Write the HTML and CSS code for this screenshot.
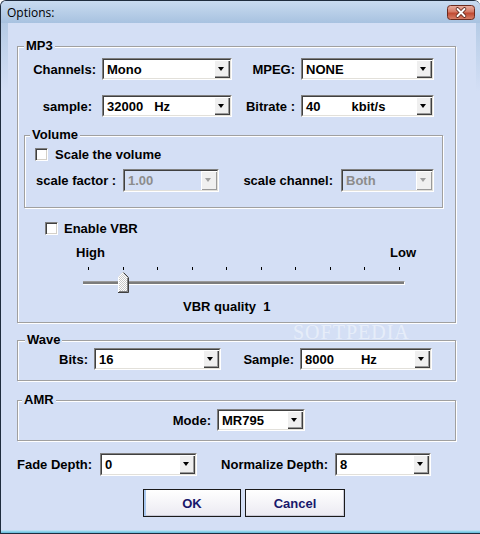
FILE: index.html
```html
<!DOCTYPE html>
<html lang="en">
<head>
  <meta charset="UTF-8">
  <title>Options</title>
  <link rel="stylesheet" href="styles.css">
</head>
<body>
  <div class="window">
    <!-- Title bar -->
    <div class="titlebar">
      <span class="title">Options:</span>
      <span class="close">
        <svg width="28" height="15" viewBox="0 0 28 15">
          <defs>
            <linearGradient id="closeGrad" x1="0" y1="0" x2="0" y2="1">
              <stop offset="0" stop-color="#eab0a2"/>
              <stop offset="0.45" stop-color="#d57a66"/>
              <stop offset="0.55" stop-color="#c04a33"/>
              <stop offset="1" stop-color="#d9836c"/>
            </linearGradient>
          </defs>
          <rect x="0.5" y="0.5" width="27" height="14" rx="3" fill="url(#closeGrad)" stroke="#6b2a1e"/>
          <path d="M10.5 4 L17.5 11 M17.5 4 L10.5 11" stroke="#5a2318" stroke-width="3.6" stroke-linecap="round"/>
          <path d="M10.5 4 L17.5 11 M17.5 4 L10.5 11" stroke="#fff" stroke-width="2" stroke-linecap="round"/>
        </svg>
      </span>
    </div>

    <div class="client">
      <!-- MP3 -->
      <fieldset class="group group-mp3">
        <legend class="legend-mp3">MP3</legend>
        <div class="row">
          <label class="lbl lbl-chan">Channels:</label>
          <div class="combo combo-130"><div class="combo-in"><span class="value">Mono</span><span class="drop"></span></div></div>
          <label class="lbl lbl-mpeg">MPEG:</label>
          <div class="combo combo-133"><div class="combo-in"><span class="value">NONE</span><span class="drop"></span></div></div>
        </div>
        <div class="row row-second">
          <label class="lbl lbl-chan lbl-sample">sample:</label>
          <div class="combo combo-130"><div class="combo-in"><span class="value">32000<span class="unit unit-hz">Hz</span></span><span class="drop"></span></div></div>
          <label class="lbl lbl-mpeg">Bitrate :</label>
          <div class="combo combo-133"><div class="combo-in"><span class="value">40<span class="unit unit-kbit">kbit/s</span></span><span class="drop"></span></div></div>
        </div>

        <!-- Volume -->
        <fieldset class="group group-volume">
          <legend class="legend-volume">Volume</legend>
          <div class="check-row check-scale">
            <span class="checkbox"></span>
            <span>Scale the volume</span>
          </div>
          <div class="row row-scale">
            <label class="lbl lbl-factor">scale factor :</label>
            <div class="combo combo-96 disabled"><div class="combo-in"><span class="value">1.00</span><span class="drop"></span></div></div>
            <label class="lbl lbl-channel">scale channel:</label>
            <div class="combo combo-93 disabled"><div class="combo-in"><span class="value">Both</span><span class="drop"></span></div></div>
          </div>
        </fieldset>

        <div class="check-row check-vbr">
          <span class="checkbox"></span>
          <span>Enable VBR</span>
        </div>

        <div class="scale-labels">
          <span>High</span>
          <span>Low</span>
        </div>
        <div class="ticks">
          <span></span><span></span><span></span><span></span><span></span>
          <span></span><span></span><span></span><span></span><span></span>
        </div>
        <div class="slider">
          <div class="track"></div>
          <svg class="thumb" width="11" height="21" viewBox="0 0 11 21">
            <defs>
              <pattern id="dither" width="2" height="2" patternUnits="userSpaceOnUse">
                <rect width="2" height="2" fill="#ffffff"/>
                <rect width="1" height="1" fill="#c8c8c8"/>
                <rect x="1" y="1" width="1" height="1" fill="#c8c8c8"/>
              </pattern>
            </defs>
            <polygon points="0,5 5,0 11,6 11,21 0,21" fill="url(#dither)"/>
            <polyline points="0.5,20 0.5,5.2 5,0.7 5.5,0.7" fill="none" stroke="#ffffff"/>
            <polyline points="5.5,0.5 10.5,5.5 10.5,20.5 0,20.5" fill="none" stroke="#404040"/>
            <polyline points="9.5,6 9.5,19.5 1,19.5" fill="none" stroke="#808080"/>
          </svg>
        </div>
        <div class="quality">VBR quality&nbsp; 1</div>
      </fieldset>

      <!-- Wave -->
      <fieldset class="group group-wave">
        <legend class="legend-wave">Wave</legend>
        <div class="row">
          <label class="lbl lbl-bits">Bits:</label>
          <div class="combo combo-127"><div class="combo-in"><span class="value">16</span><span class="drop"></span></div></div>
          <label class="lbl lbl-wsample">Sample:</label>
          <div class="combo combo-132"><div class="combo-in"><span class="value">8000<span class="unit unit-whz">Hz</span></span><span class="drop"></span></div></div>
        </div>
      </fieldset>

      <!-- AMR -->
      <fieldset class="group group-amr">
        <legend class="legend-amr">AMR</legend>
        <div class="row">
          <label class="lbl lbl-mode">Mode:</label>
          <div class="combo combo-88"><div class="combo-in"><span class="value">MR795</span><span class="drop"></span></div></div>
        </div>
      </fieldset>

      <div class="row row-depth">
        <label class="lbl lbl-fade">Fade Depth:</label>
        <div class="combo combo-97"><div class="combo-in"><span class="value">0</span><span class="drop"></span></div></div>
        <label class="lbl lbl-norm">Normalize Depth:</label>
        <div class="combo combo-96"><div class="combo-in"><span class="value">8</span><span class="drop"></span></div></div>
      </div>

      <div class="buttons">
        <button class="btn btn-ok">OK</button>
        <button class="btn btn-cancel">Cancel</button>
      </div>
    </div>

    <!-- watermark -->
    <span class="mark">SOFTPEDIA</span>
  </div>
</body>
</html>
```

FILE: styles.css
```css
/* Base */
* {
  box-sizing: border-box;
}

body {
  margin: 0;
  background: #ffffff;
  font-family: "Liberation Sans", Arial, sans-serif;
}

/* Window frame */
.window {
  position: relative;
  width: 480px;
  height: 534px;
  display: flex;
  flex-direction: column;
  border: 1px solid #1f2c3d;
  border-right: none;
  border-radius: 6px 6px 0 0;
  overflow: hidden;
  background: linear-gradient(to bottom, #a9c3e1 0, #bed1ea 40px, #d4dff5 90px, #d4dff5 calc(100% - 3px), #9fdcf0 calc(100% - 2px), #5fb8d8 100%);
}

.titlebar {
  height: 22px;
  display: flex;
  align-items: center;
  padding-left: 6px;
  background: linear-gradient(to bottom, #c9dbf0, #a8c2e0);
}

.title {
  font-family: "Open Sans", "Noto Sans", sans-serif;
  font-size: 12px;
  color: #000000;
}

.close {
  margin-left: auto;
  margin-right: 5px;
  align-self: flex-start;
  margin-top: 4px;
  height: 15px;
}

.close svg {
  display: block;
}

.client {
  flex: 1;
  margin: 0 4px 3px 7px;
  padding: 16px 0 0 9px;
  background: #d4dff5;
  font-size: 13px;
  font-weight: bold;
  color: #000000;
}

/* Group boxes */
.group {
  margin: 0;
  padding: 0;
  min-width: 0;
  border: 1px solid #a0a0a0;
  box-shadow: inset 1px 1px 0 #ffffff, 1px 1px 0 #ffffff;
}

.group legend {
  padding: 0 2px;
  height: 14px;
  line-height: 14px;
  background: #d4dff5;
}

.legend-mp3 { margin-left: 6px; }
.legend-volume { margin-left: 5px; }
.legend-wave { margin-left: 7px; }
.legend-amr { margin-left: 4px; }

.group-mp3 {
  width: 439px;
  padding: 5px 0 8px 0;
}

.group-volume {
  width: 419px;
  margin: 11px 0 0 6px;
  padding: 4px 0 16px 0;
}

.group-wave {
  width: 439px;
  margin-top: 10px;
  padding: 1px 0 10px 0;
}

.group-amr {
  width: 439px;
  margin-top: 12px;
  padding: 2px 0 9px 0;
}

/* Rows */
.row {
  display: flex;
  align-items: center;
  height: 22px;
}

.row-second {
  margin-top: 15px;
}

.lbl {
  white-space: nowrap;
}

.lbl-chan {
  width: 78px;
  text-align: right;
  margin-right: 6px;
}

.lbl-sample {
  padding-right: 4px;
}

.lbl-mpeg {
  width: 63px;
  text-align: right;
  margin-right: 6px;
}

.row-scale {
  margin-top: 7px;
}

.row-scale .combo {
  height: 23px;
}

.lbl-factor {
  width: 94px;
  padding-left: 11px;
  margin-right: 4px;
}

.lbl-channel {
  width: 114px;
  text-align: right;
  margin-right: 8px;
}

.lbl-bits {
  width: 70px;
  text-align: right;
  margin-right: 6px;
}

.lbl-wsample {
  width: 73px;
  text-align: right;
  margin-right: 6px;
}

.lbl-mode {
  width: 193px;
  text-align: right;
  margin-right: 6px;
}

.row-depth {
  margin-top: 12px;
  height: 23px;
}

.lbl-fade {
  width: 77px;
  margin-right: 6px;
}

.lbl-norm {
  width: 131px;
  text-align: right;
  margin-right: 7px;
}

/* Combo boxes */
.combo {
  height: 22px;
  border: 1px solid;
  border-color: #808080 #ffffff #ffffff #808080;
}

.row-depth .combo {
  height: 23px;
}

.combo-in {
  height: 100%;
  display: flex;
  align-items: center;
  border: 1px solid;
  border-color: #404040 #e2e0da #e2e0da #404040;
  background: #ffffff;
}

.combo-88 { width: 88px; }
.combo-93 { width: 93px; }
.combo-96 { width: 96px; }
.combo-97 { width: 97px; }
.combo-127 { width: 127px; }
.combo-130 { width: 130px; }
.combo-132 { width: 132px; }
.combo-133 { width: 133px; }

.value {
  flex: 1;
  padding-left: 3px;
  white-space: nowrap;
  overflow: hidden;
}

.unit-hz { margin-left: 11px; }
.unit-kbit { margin-left: 31px; }
.unit-whz { margin-left: 27px; }

.drop {
  position: relative;
  width: 16px;
  height: 100%;
  background: #efefef;
  box-shadow: inset 1px 1px 0 #ffffff, inset -1px -1px 0 #404040, inset -2px -2px 0 #9a9a9a;
}

.drop::after {
  content: "";
  position: absolute;
  left: 4px;
  top: 7px;
  border-left: 3.5px solid transparent;
  border-right: 3.5px solid transparent;
  border-top: 4px solid #000000;
}

.combo.disabled .combo-in {
  background: #d4dff5;
}

.combo.disabled .value {
  color: #8c8c8c;
}

.combo.disabled .drop {
  background: #f0f0f0;
  box-shadow: inset 1px 1px 0 #ffffff, inset -1px -1px 0 #9a9a9a;
}

.combo.disabled .drop::after {
  border-top-color: #a0a0a0;
}

/* Checkboxes */
.check-row {
  display: flex;
  align-items: center;
  height: 16px;
  gap: 7px;
}

.check-scale {
  padding-left: 10px;
}

.check-vbr {
  margin: 12px 0 0 27px;
  gap: 6px;
}

.checkbox {
  width: 13px;
  height: 13px;
  background: #ffffff;
  border: 1px solid;
  border-color: #808080 #ffffff #ffffff #808080;
  box-shadow: inset 1px 1px 0 #404040, inset -1px -1px 0 #d4d0c8;
}

/* VBR slider */
.scale-labels {
  display: flex;
  justify-content: space-between;
  width: 340px;
  height: 14px;
  line-height: 14px;
  margin: 10px 0 0 58px;
}

.ticks {
  display: flex;
  justify-content: space-between;
  width: 312px;
  height: 3px;
  margin: 7px 0 0 70px;
}

.ticks span {
  width: 1px;
  height: 3px;
  background: #000000;
}

.slider {
  position: relative;
  width: 322px;
  height: 23px;
  padding-top: 10px;
  margin: 1px 0 0 65px;
}

.track {
  height: 4px;
  background: #7c7c7c;
  border-top: 1px solid #9a9a9a;
  border-bottom: 1px solid #ffffff;
  border-right: 1px solid #ffffff;
}

.thumb {
  position: absolute;
  left: 35px;
  top: 1px;
}

.quality {
  height: 14px;
  line-height: 14px;
  margin-top: 6px;
  padding-left: 165px;
}

/* Buttons */
.buttons {
  display: flex;
  gap: 4px;
  margin-top: 13px;
  padding-left: 126px;
}

.btn {
  height: 28px;
  border: 1px solid #1a1a1a;
  background: linear-gradient(to bottom, #ffffff, #ebeaf2);
  font-family: "Liberation Sans", Arial, sans-serif;
  font-size: 13px;
  font-weight: bold;
  color: #17176b;
  padding: 0;
}

.btn-ok {
  width: 98px;
  box-shadow: inset 2px 0 0 #a9c8ef, inset 0 -1px 0 #c9c9d6;
}

.btn-cancel {
  width: 100px;
  box-shadow: inset 0 -1px 0 #c9c9d6, inset -1px 0 0 #c9c9d6;
}

/* Watermark */
.mark {
  position: absolute;
  left: 292px;
  top: 320px;
  font-family: "Liberation Serif", serif;
  font-size: 20px;
  letter-spacing: 1px;
  color: rgba(255, 255, 255, 0.45);
}
```
